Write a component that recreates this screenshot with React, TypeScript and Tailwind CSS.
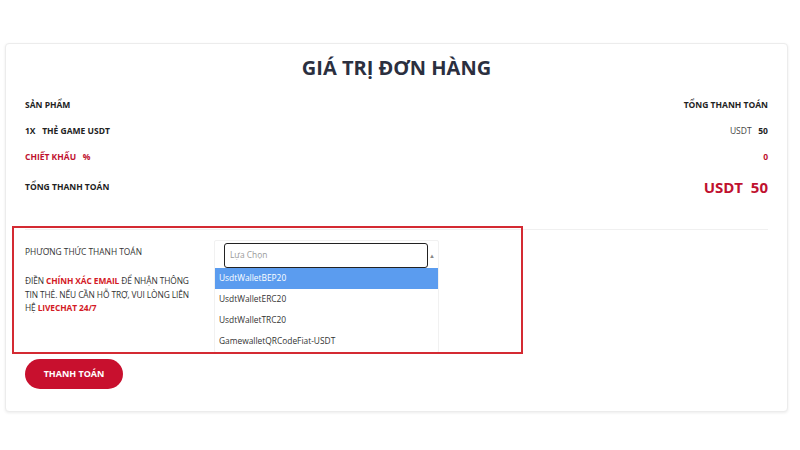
const Row = ({
  left,
  right,
  className,
}: {
  left: React.ReactNode;
  right: React.ReactNode;
  className?: string;
}) => {
  return (
    <div className={`flex items-center justify-between ${className}`}>
      <div>{left}</div>
      <div>{right}</div>
    </div>
  );
};

const options = [
  "UsdtWalletBEP20",
  "UsdtWalletERC20",
  "UsdtWalletTRC20",
  "GamewalletQRCodeFiat-USDT",
];

export default function App() {
  return (
    <div
      className="w-[800px] h-[450px] bg-white pt-[43px] pl-[5px]"
      style={{ fontFamily: '"Open Sans", "Noto Sans", sans-serif' }}
    >
      <div className="relative w-[783px] h-[369px] rounded-[4px] border border-[#ececec] shadow-[0_1px_3px_rgba(0,0,0,0.08)] bg-white px-[19px]">
        <h1 className="text-center text-[20px] font-bold text-[#2b2f3f] leading-[28px] pt-[10px]">
          GIÁ TRỊ ĐƠN HÀNG
        </h1>

        <div className="text-[8.5px] font-bold text-[#222] mt-[16px]">
          <Row
            className="h-[14px]"
            left="SẢN PHẨM"
            right="TỔNG THANH TOÁN"
          />
          <Row
            className="h-[14px] mt-[12px]"
            left={<span>1X&nbsp;&nbsp; THẺ GAME USDT</span>}
            right={
              <span>
                <span className="font-normal text-[#444]">USDT</span>&nbsp;&nbsp; 50
              </span>
            }
          />
          <Row
            className="h-[14px] mt-[12px] text-[#c0112f]"
            left={<span>CHIẾT KHẤU&nbsp;&nbsp; %</span>}
            right="0"
          />
          <Row
            className="h-[20px] mt-[13px]"
            left="TỔNG THANH TOÁN"
            right={
              <span className="text-[15px] text-[#c0112f]">USDT&nbsp; 50</span>
            }
          />
        </div>

        <div className="mt-[32px] border-t border-[#f0f0f0]" />

        <div className="flex mt-[10px]">
          <div className="w-[189px] text-[8.4px] text-[#333] uppercase">
            <div className="mt-[5px] leading-[14px]">PHƯƠNG THỨC THANH TOÁN</div>
            <p className="mt-[15px] leading-[13.5px] w-[176px] tracking-[-0.1px]">
              ĐIỀN <span className="font-bold text-[#d31a26]">CHÍNH XÁC EMAIL</span> ĐỂ
              NHẬN THÔNG TIN THẺ. NẾU CẦN HỖ TRỢ, VUI LÒNG LIÊN HỆ{" "}
              <span className="font-bold text-[#d31a26]">LIVECHAT 24/7</span>
            </p>
          </div>

          <div className="w-[225px] border border-[#f1f1f1] rounded-[2px] text-[8.4px]">
            <div className="flex items-center pt-[2px] pl-[9px] pr-[2px]">
              <div className="flex-1 h-[25px] border border-[#222] rounded-[3px] flex items-center px-[5px] text-[#9a9a9a]">
                Lựa Chọn
              </div>
              <span className="w-[8px] text-[6px] text-[#888] text-center leading-none">▲</span>
            </div>
            <ul>
              {options.map((o, i) => (
                <li
                  key={o}
                  className={`h-[21px] flex items-center px-[4px] ${
                    i === 0 ? "bg-[#5b9cef] text-white" : "text-[#333]"
                  }`}
                >
                  {o}
                </li>
              ))}
            </ul>
          </div>
        </div>

        <button className="mt-[6px] w-[98px] h-[30px] rounded-full bg-[#c8102e] text-white text-[9px] font-bold">
          THANH TOÁN
        </button>

        {/* highlight annotation */}
        <div className="absolute left-[6px] top-[182px] w-[511px] h-[128px] border-2 border-[#d42a32] pointer-events-none" />
      </div>
    </div>
  );
}
